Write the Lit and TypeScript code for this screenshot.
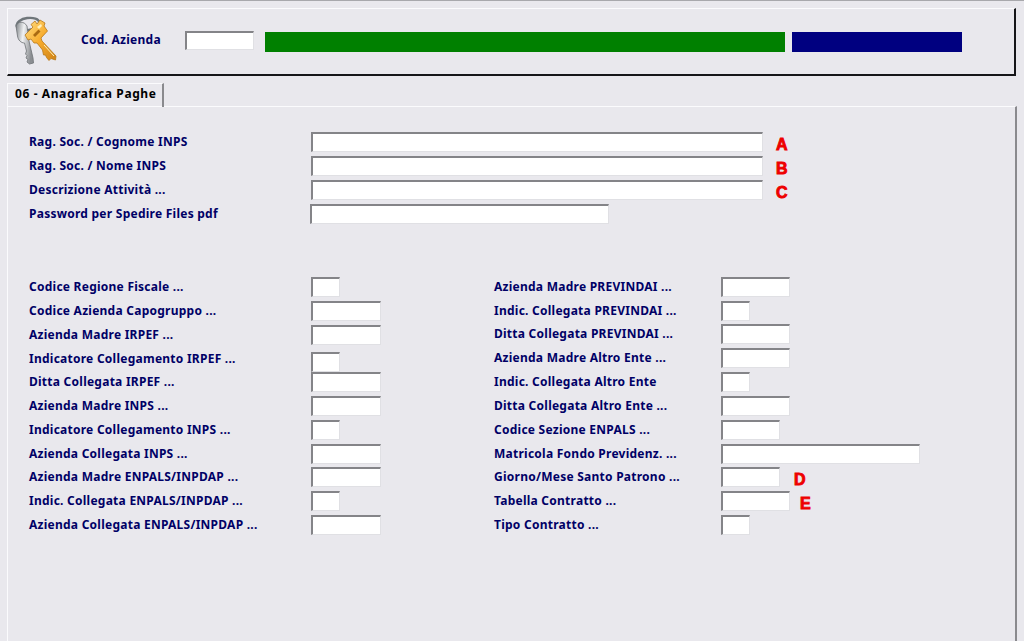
import { LitElement, html, css, svg } from "lit";
import { customElement } from "lit/decorators.js";

interface Field { label: string; w: number; h: number; mark?: string; gap?: number; low?: boolean; out?: boolean; }

const top: Field[] = [
  { label: "Rag. Soc. / Cognome INPS", w: 452, h: 24, mark: "A", gap: 13 },
  { label: "Rag. Soc. / Nome INPS", w: 452, h: 24, mark: "B", gap: 13 },
  { label: "Descrizione Attività ...", w: 452, h: 24, mark: "C", gap: 13 },
  { label: "Password per Spedire Files pdf", w: 299, h: 24, out: true },
];
const left: Field[] = [
  { label: "Codice Regione Fiscale ...", w: 29, h: 24 },
  { label: "Codice Azienda Capogruppo ...", w: 70, h: 24 },
  { label: "Azienda Madre IRPEF ...", w: 70, h: 24 },
  { label: "Indicatore Collegamento IRPEF ...", w: 29, h: 23, low: true },
  { label: "Ditta Collegata IRPEF ...", w: 70, h: 24 },
  { label: "Azienda Madre INPS ...", w: 70, h: 24 },
  { label: "Indicatore Collegamento INPS ...", w: 29, h: 24 },
  { label: "Azienda Collegata INPS ...", w: 70, h: 23 },
  { label: "Azienda Madre ENPALS/INPDAP ...", w: 70, h: 24 },
  { label: "Indic. Collegata ENPALS/INPDAP ...", w: 29, h: 24 },
  { label: "Azienda Collegata ENPALS/INPDAP ...", w: 70, h: 24 },
];
const right: Field[] = [
  { label: "Azienda Madre PREVINDAI ...", w: 69, h: 24 },
  { label: "Indic. Collegata PREVINDAI ...", w: 29, h: 23 },
  { label: "Ditta Collegata PREVINDAI ...", w: 69, h: 24 },
  { label: "Azienda Madre Altro Ente ...", w: 69, h: 24 },
  { label: "Indic. Collegata Altro Ente", w: 29, h: 24 },
  { label: "Ditta Collegata Altro Ente ...", w: 69, h: 24 },
  { label: "Codice Sezione ENPALS ...", w: 59, h: 24 },
  { label: "Matricola Fondo Previdenz. ...", w: 199, h: 23 },
  { label: "Giorno/Mese Santo Patrono ...", w: 59, h: 24, mark: "D", gap: 14 },
  { label: "Tabella Contratto ...", w: 69, h: 24, mark: "E", gap: 10 },
  { label: "Tipo Contratto ...", w: 29, h: 24 },
];

const keyIcon = svg`
<svg class="keys" width="44" height="50" viewBox="15 16 44 50" aria-hidden="true">
  <defs>
    <linearGradient id="silver" x1="0" y1="0" x2="1" y2="0.3">
      <stop offset="0" stop-color="#7f8488"/><stop offset=".45" stop-color="#f0f1f2"/><stop offset="1" stop-color="#8b8e92"/>
    </linearGradient>
    <linearGradient id="gold" x1="0" y1="0" x2="1" y2="1">
      <stop offset="0" stop-color="#ffdf86"/><stop offset=".5" stop-color="#f7ab2c"/><stop offset="1" stop-color="#cf8216"/>
    </linearGradient>
  </defs>
  <ellipse cx="28" cy="24" rx="11.5" ry="6" fill="none" stroke="#6f767a" stroke-width="2.4" transform="rotate(-8 28 24)"/>
  <path d="M16 26 C18 21 24 21 27 26 L29 41 L33 58 L33.5 63 L29.5 64 L27 62 L28 59.5 L26 58 L27 55.5 L25.5 54 L26.5 51 L24.5 43 C21 43 18 40 17.5 36 Z" fill="url(#silver)" stroke="#6d7175" stroke-width=".8"/>
  <path d="M25 35 L33 27 L31 24.5 L35 21 L37 24 L40 20 L45 23 L44 26 L47.5 31 L41 38 L42 41 L56 56 L55.5 60 L51 58.5 L49 60.5 L46.5 57.5 L45.5 55 L43.5 55 L42.5 50 L37 43 L34 43 L31 39 L28 40 Z" fill="url(#gold)" stroke="#b7791a" stroke-width=".8"/>
  <path d="M33 35 L38.5 29.5 L40.5 31.5 L35 37 Z" fill="#a96a12"/>
  <path d="M37 27 L41 24 L42 26 L39 29 Z" fill="#fff1bf"/>
  <path d="M44 45 L54 56" stroke="#fff0b8" stroke-width="1"/>
</svg>`;

@customElement("app-root")
export class AppRoot extends LitElement {
  static styles = css`
    :host {
      display: block; width: 1024px; height: 641px; overflow: hidden;
      background: #e9e8ed; box-sizing: border-box;
      border-top: 1px solid #a8a8ac;
      font: bold 12px "Noto Sans", sans-serif;
      color: #000066;
    }
    .header {
      margin: 7px 8px 0 7px; height: 68px; box-sizing: border-box;
      border-top: 1px solid #fbfbfd; border-left: 1px solid #fbfbfd;
      border-right: 2px solid #151518; border-bottom: 2px solid #151518;
      display: flex; align-items: flex-start;
    }
    .keys { margin: 7px 0 0 7px; flex: none; }
    .cod { width: 104px; margin: 22px 0 0 22px; line-height: 17px; letter-spacing: .25px; white-space: nowrap; }
    .header input { margin-top: 22px; width: 69px; height: 19px; }
    .bar { height: 20px; margin-top: 23px; }
    .green { width: 520px; margin-left: 11px; background: #008000; }
    .blue { width: 170px; margin-left: 7px; background: #000080; }
    .tabs { margin: 7px 0 0 7px; height: 24px; display: flex; }
    .tab {
      width: 157px; height: 24px; box-sizing: border-box; padding-left: 7px;
      border-top: 1px solid #fbfbfd; border-left: 1px solid #fbfbfd;
      border-right: 2px solid #8a8a8e;
      color: #000; line-height: 19px; letter-spacing: .6px; white-space: nowrap;
    }
    .panel {
      margin: -1px 7px 0 7px; height: 540px; box-sizing: border-box;
      border-top: 1px solid #fbfbfd; border-left: 1px solid #fbfbfd;
      border-right: 2px solid #8a8a8e; padding: 25px 0 0 21px;
    }
    .cols { display: flex; margin-top: 49px; }
    .col-l { width: 465px; flex: none; }
    .row { display: flex; align-items: flex-start; }
    .lbl { width: 282px; flex: none; line-height: 19px; letter-spacing: .25px; white-space: nowrap; }
    .col-r .lbl { width: 227px; }
    .low input { margin-top: 3px; }
    .out .lbl { width: 281px; }
    input {
      display: block; box-sizing: border-box; height: 20px; padding: 0; margin: 0; flex: none;
      background: #fff; outline: none; border-radius: 0;
      border-style: solid; border-width: 2px 1px 1px 2px;
      border-color: #848488 #e0e0e4 #e0e0e4 #848488;
    }
    .mark { color: #ee0000; font: 900 16px/25px "Liberation Sans", sans-serif; -webkit-text-stroke: .9px #ee0000; }
  `;

  private field(f: Field) {
    return html`<div class="row ${f.low ? "low" : ""} ${f.out ? "out" : ""}" style="height:${f.h}px">
      <div class="lbl">${f.label}</div>
      <input type="text" style="width:${f.w}px" aria-label=${f.label} />
      ${f.mark ? html`<span class="mark" style="margin-left:${f.gap}px">${f.mark}</span>` : ""}
    </div>`;
  }

  render() {
    return html`
      <div class="header">
        ${keyIcon}
        <div class="cod">Cod. Azienda</div>
        <input type="text" aria-label="Cod. Azienda" />
        <div class="bar green"></div>
        <div class="bar blue"></div>
      </div>
      <div class="tabs"><div class="tab">06 - Anagrafica Paghe</div></div>
      <div class="panel">
        ${top.map((f) => this.field(f))}
        <div class="cols">
          <div class="col-l">${left.map((f) => this.field(f))}</div>
          <div class="col-r">${right.map((f) => this.field(f))}</div>
        </div>
      </div>
    `;
  }
}
